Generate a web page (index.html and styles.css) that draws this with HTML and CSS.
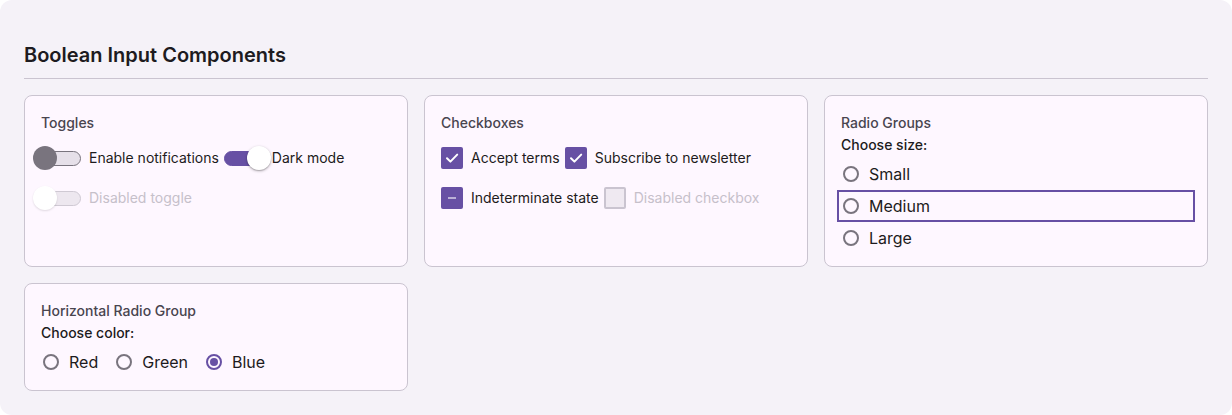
FILE: index.html
```html
<!DOCTYPE html>
<html lang="en">
<head>
<meta charset="utf-8">
<title>Boolean Input Components</title>
<link rel="stylesheet" href="styles.css">
</head>
<body>
<main class="page">
  <h2 class="page-title">Boolean Input Components</h2>
  <div class="grid">
    <section class="card">
      <h3 class="card-title">Toggles</h3>
      <div class="wrap-row">
        <label class="switch-item">
          <span class="switch"><span class="thumb"></span></span>
          <span class="label">Enable notifications</span>
        </label>
        <label class="switch-item is-on">
          <span class="switch"><span class="thumb"></span></span>
          <span class="label">Dark mode</span>
        </label>
        <label class="switch-item is-disabled">
          <span class="switch"><span class="thumb"></span></span>
          <span class="label">Disabled toggle</span>
        </label>
      </div>
    </section>

    <section class="card">
      <h3 class="card-title">Checkboxes</h3>
      <div class="wrap-row">
        <label class="check-item">
          <span class="box is-checked">
            <svg viewBox="0 0 22 22" width="22" height="22"><path d="M6 11.2l3.4 3.4L16.2 7.6" fill="none" stroke="#fff" stroke-width="2" stroke-linecap="round" stroke-linejoin="round"/></svg>
          </span>
          <span class="label">Accept terms</span>
        </label>
        <label class="check-item">
          <span class="box is-checked">
            <svg viewBox="0 0 22 22" width="22" height="22"><path d="M6 11.2l3.4 3.4L16.2 7.6" fill="none" stroke="#fff" stroke-width="2" stroke-linecap="round" stroke-linejoin="round"/></svg>
          </span>
          <span class="label">Subscribe to newsletter</span>
        </label>
        <label class="check-item">
          <span class="box is-checked"><span class="dash"></span></span>
          <span class="label">Indeterminate state</span>
        </label>
        <label class="check-item is-disabled">
          <span class="box"></span>
          <span class="label">Disabled checkbox</span>
        </label>
      </div>
    </section>

    <section class="card">
      <h3 class="card-title">Radio Groups</h3>
      <div class="group-label">Choose size:</div>
      <div class="radio-col">
        <label class="radio-item"><span class="radio"></span><span class="radio-label">Small</span></label>
        <label class="radio-item is-focused"><span class="radio"></span><span class="radio-label">Medium</span></label>
        <label class="radio-item"><span class="radio"></span><span class="radio-label">Large</span></label>
      </div>
    </section>

    <section class="card">
      <h3 class="card-title">Horizontal Radio Group</h3>
      <div class="group-label">Choose color:</div>
      <div class="radio-row">
        <label class="radio-item"><span class="radio"></span><span class="radio-label">Red</span></label>
        <label class="radio-item"><span class="radio"></span><span class="radio-label">Green</span></label>
        <label class="radio-item"><span class="radio is-selected"></span><span class="radio-label">Blue</span></label>
      </div>
    </section>
  </div>
</main>
</body>
</html>
```

FILE: styles.css
```css
* { box-sizing: border-box; }

html, body {
  margin: 0;
  background: #ffffff;
}

body {
  font-family: Inter, "Noto Sans", sans-serif;
  color: #1d1b20;
}

.page {
  min-height: 100vh;
  padding: 24px;
  background: #f5f2f8;
  border-radius: 12px;
}

.page-title {
  margin: 17px 0 16px;
  padding-bottom: 9px;
  font-size: 20px;
  line-height: 28px;
  font-weight: 600;
  color: #1d1b20;
  border-bottom: 1px solid #cac4d0;
}

.grid {
  display: grid;
  grid-template-columns: repeat(3, 1fr);
  gap: 16px;
}

.card {
  background: #fef7ff;
  border: 1px solid #cac4d0;
  border-radius: 8px;
  padding: 16px;
}

.card-title {
  margin: 0 0 1px;
  font-size: 14px;
  line-height: 22px;
  font-weight: 500;
  color: #49454f;
}

.wrap-row {
  display: flex;
  flex-wrap: wrap;
  gap: 4px 5px;
  margin-top: 6px;
}

.label {
  font-size: 14px;
  line-height: 20px;
}

/* Toggles */
.switch-item {
  display: inline-flex;
  align-items: center;
  gap: 8px;
  height: 36px;
}

.switch {
  position: relative;
  width: 40px;
  height: 15px;
  border-radius: 8px;
  background: #e6e0e9;
  border: 1.5px solid #79747e;
}

.thumb {
  position: absolute;
  top: -6px;
  left: -9.5px;
  width: 24px;
  height: 24px;
  border-radius: 50%;
  background: #79747e;
}

.switch-item.is-on .switch {
  background: #6750a4;
  border-color: #6750a4;
}

.switch-item.is-on .thumb {
  left: 22.5px;
  background: #ffffff;
  box-shadow: 0 1px 3px rgba(0, 0, 0, 0.3), 0 1px 1px rgba(0, 0, 0, 0.14);
}

.switch-item.is-disabled .switch {
  background: #ede7ef;
  border-color: #cfc9d3;
}

.switch-item.is-disabled .thumb {
  background: #ffffff;
  box-shadow: 0 1px 2px rgba(0, 0, 0, 0.12);
}

.is-disabled .label {
  color: #c6c0ca;
}

/* Checkboxes */
.check-item {
  display: inline-flex;
  align-items: center;
  gap: 8px;
  height: 36px;
}

.box {
  width: 22px;
  height: 22px;
  border-radius: 2px;
  border: 2px solid #cac4d0;
  background: #efe9f1;
  display: flex;
  align-items: center;
  justify-content: center;
}

.box.is-checked {
  background: #6750a4;
  border: none;
}

.box svg { display: block; }

.dash {
  width: 8px;
  height: 2px;
  background: rgba(255, 255, 255, 0.55);
}

/* Radios */
.group-label {
  font-size: 14px;
  line-height: 20px;
  font-weight: 500;
  color: #1d1b20;
}

.radio-col {
  display: flex;
  flex-direction: column;
  gap: 8px;
  margin-top: 7px;
}

.radio-row {
  display: flex;
  gap: 14px;
  margin-top: 7px;
}

.radio-item {
  display: flex;
  align-items: center;
  gap: 10px;
  height: 24px;
  padding: 0 2px;
}

.radio-item.is-focused {
  outline: 2px solid #6750a4;
  outline-offset: 2px;
}

.radio {
  width: 16px;
  height: 16px;
  border-radius: 50%;
  border: 2px solid #79747e;
  display: flex;
  align-items: center;
  justify-content: center;
}

.radio.is-selected {
  border-color: #6750a4;
}

.radio.is-selected::after {
  content: "";
  width: 8px;
  height: 8px;
  border-radius: 50%;
  background: #6750a4;
}

.radio-label {
  font-size: 16px;
  line-height: 24px;
}
```
